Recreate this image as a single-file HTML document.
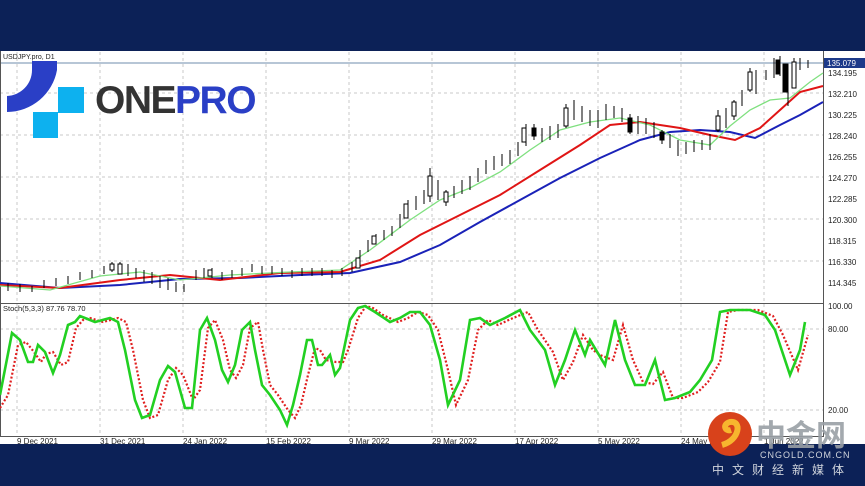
<!DOCTYPE html>
<html><head><meta charset="utf-8"><style>
html,body{margin:0;padding:0;width:865px;height:486px;overflow:hidden;background:#0c2157;font-family:"Liberation Sans",sans-serif}
svg{position:absolute;left:0;top:0}
</style></head><body>
<svg width="865" height="486" viewBox="0 0 865 486">
<rect x="0" y="0" width="865" height="51" fill="#0c2157"/>
<rect x="0" y="51" width="865" height="393" fill="#fff"/>
<rect x="0" y="444" width="865" height="42" fill="#0c2157"/>
<g stroke="#c8c8c8" stroke-dasharray="3,3" stroke-width="1">
<line x1="17" y1="52" x2="17" y2="436"/><line x1="100" y1="52" x2="100" y2="436"/><line x1="183" y1="52" x2="183" y2="436"/><line x1="266" y1="52" x2="266" y2="436"/><line x1="349" y1="52" x2="349" y2="436"/><line x1="432" y1="52" x2="432" y2="436"/><line x1="515" y1="52" x2="515" y2="436"/><line x1="598" y1="52" x2="598" y2="436"/><line x1="681" y1="52" x2="681" y2="436"/><line x1="764" y1="52" x2="764" y2="436"/>
<line x1="0" y1="93" x2="823" y2="93"/><line x1="0" y1="135" x2="823" y2="135"/><line x1="0" y1="177" x2="823" y2="177"/><line x1="0" y1="219" x2="823" y2="219"/><line x1="0" y1="261" x2="823" y2="261"/>
<line x1="0" y1="329" x2="823" y2="329"/><line x1="0" y1="410" x2="823" y2="410"/>
</g>
<line x1="0" y1="63" x2="823" y2="63" stroke="#9fb3c8" stroke-width="1.5"/>
<g stroke="#555" fill="none" stroke-width="1">
<line x1="0.5" y1="51" x2="0.5" y2="436"/><line x1="823.5" y1="51" x2="823.5" y2="436"/>
<line x1="0" y1="303.5" x2="824" y2="303.5"/><line x1="0" y1="436.5" x2="824" y2="436.5"/>
</g>
<polyline fill="none" stroke="#1a22b8" stroke-width="2" points="0,283 60,288 120,285 180,279 240,278 300,275 350,273 400,262 440,245 480,222 520,200 560,178 600,158 640,140 670,132 700,130 730,132 755,138 780,125 800,115 823,102"/>
<polyline fill="none" stroke="#e01515" stroke-width="2" points="0,285 60,288 120,280 170,275 220,280 280,273 340,272 380,260 420,235 460,215 500,195 540,170 580,145 610,125 640,122 680,128 710,135 735,140 760,128 780,110 800,92 823,86"/>
<polyline fill="none" stroke="#7fe07f" stroke-width="1.3" points="0,286 50,290 100,276 140,272 180,280 230,275 290,272 340,270 370,250 410,220 440,200 470,188 500,172 530,150 560,130 590,122 620,118 650,125 680,140 710,145 730,126 750,110 770,100 790,98 810,82 823,73"/>
<g stroke="#000" stroke-width="1" fill="#fff">
<path d="M8,283v8M20,284v8M32,286v6M44,280v8M56,278v8M68,276v8M80,272v8M92,270v8M104,266v8M112,262v10M120,262v12M128,264v12M136,268v10M144,270v12M152,272v12M160,276v12M168,278v12M176,282v10M184,284v8M196,270v10M204,268v10M212,268v10M222,272v8M232,270v8M242,268v8M252,264v8M262,266v8M272,266v8M282,268v8M292,270v8M302,268v8M312,268v8M322,268v8M332,270v8M342,268v8M352,262v10M360,250v12M368,240v12M376,234v10M384,230v10M392,226v10M400,214v14M408,200v14M416,196v14M424,190v14M430,168v34M438,180v20M446,190v16M454,186v12M462,180v14M470,176v14M478,168v14M486,160v14M494,156v14M502,154v12M510,150v14M518,142v14M526,124v22M534,124v16M542,128v14M550,126v14M558,124v14M566,104v24M574,100v20M582,106v16M590,110v16M598,110v18M606,104v16M614,106v12M622,108v14M630,114v20M638,116v18M646,118v16M654,122v16M662,130v14M670,134v14M678,140v16M686,142v12M694,140v12M702,140v10M710,134v16M718,110v22M726,108v20M734,100v20M742,90v16M750,68v24M756,70v24M766,70v10M774,58v20M780,56v20M788,66v40M794,58v30M800,58v12M808,60v8"/>
<path d="M110,264h4v6h-4zM118,264h4v10h-4zM208,270h4v6h-4zM356,258h4v10h-4zM372,236h4v8h-4zM404,204h4v14h-4zM428,176h4v20h-4zM444,192h4v10h-4zM522,128h4v14h-4zM564,108h4v18h-4zM716,116h4v14h-4zM732,102h4v14h-4zM748,72h4v18h-4zM792,62h4v26h-4z"/>
<path d="M532,128h4v8h-4zM628,118h4v14h-4zM660,132h4v8h-4zM776,60h4v14h-4zM783,64h5v28h-5z" fill="#000"/>
</g>
<polyline fill="none" stroke="#e02020" stroke-width="2.2" stroke-dasharray="2,2" points="0,408 8,395 18,345 26,342 34,352 41,362 46,354 53,352 61,365 68,362 76,328 83,320 90,318 103,322 118,318 126,322 133,350 143,400 150,418 158,415 168,380 176,368 183,375 193,400 200,390 208,328 215,320 223,340 230,370 236,378 243,365 250,328 258,322 263,350 270,385 278,395 288,410 295,418 301,405 308,375 315,348 320,350 326,360 336,362 343,362 348,350 358,318 366,306 373,308 383,315 398,322 408,318 418,312 428,315 438,330 448,370 456,405 468,380 478,330 488,320 498,325 513,318 528,312 538,330 553,352 563,380 573,362 583,335 593,350 600,355 613,360 623,325 633,360 643,382 653,384 663,372 673,398 683,398 698,392 708,382 720,362 728,312 738,310 758,310 773,316 783,335 798,370 808,335"/>
<polyline fill="none" stroke="#22d022" stroke-width="2.6" points="0,395 12,333 20,340 28,362 33,362 38,345 45,352 53,373 60,355 68,325 75,322 80,316 85,318 95,322 110,318 118,322 125,350 135,400 142,418 150,415 160,380 168,366 175,372 185,408 192,408 200,330 207,318 215,340 222,370 228,382 235,365 242,330 250,322 255,350 262,385 270,395 280,410 287,425 293,405 300,375 307,340 312,340 318,365 322,365 330,355 335,375 340,368 350,320 358,308 365,306 375,312 390,322 400,318 410,312 420,312 430,325 440,360 448,405 460,380 470,320 480,318 490,325 505,318 520,310 530,330 545,350 555,385 565,360 575,330 585,355 590,340 605,365 615,320 625,360 635,385 645,385 655,360 665,400 675,398 690,392 700,380 712,360 720,312 730,310 750,310 765,315 775,330 790,375 800,350 805,322"/>
<g font-size="8" fill="#222" font-family="Liberation Sans,sans-serif">
<text x="3" y="59" font-size="7">USDJPY.pro, D1</text>
<text x="3" y="311" font-size="7.5">Stoch(5,3,3) 87.76 78.70</text>
<text x="828" y="76">134.195</text><text x="828" y="97">132.210</text><text x="828" y="118">130.225</text><text x="828" y="139">128.240</text><text x="828" y="160">126.255</text><text x="828" y="181">124.270</text><text x="828" y="202">122.285</text><text x="828" y="223">120.300</text><text x="828" y="244">118.315</text><text x="828" y="265">116.330</text><text x="828" y="286">114.345</text>
<text x="828" y="309">100.00</text><text x="828" y="332">80.00</text><text x="828" y="413">20.00</text>
<text x="17" y="444">9 Dec 2021</text><text x="100" y="444">31 Dec 2021</text><text x="183" y="444">24 Jan 2022</text><text x="266" y="444">15 Feb 2022</text><text x="349" y="444">9 Mar 2022</text><text x="432" y="444">29 Mar 2022</text><text x="515" y="444">17 Apr 2022</text><text x="598" y="444">5 May 2022</text><text x="681" y="444">24 May 2022</text><text x="764" y="444">1 Jun 2022</text>
</g>
<rect x="824" y="58" width="41" height="10" fill="#1d3a8a"/>
<text x="827" y="66" font-size="8" fill="#fff">135.079</text>
<path d="M7,112 V96 A26,26 0 0 0 32,70 V61 H57 V70 A51,51 0 0 1 7,112 Z" fill="#2a3fc6"/>
<rect x="58" y="87" width="26" height="26" fill="#0db1ef"/>
<rect x="33" y="112" width="25" height="26" fill="#0db1ef"/>
<text x="95" y="113" font-size="39" font-weight="bold" fill="#333" letter-spacing="-1.5">ONE<tspan fill="#2a3fc6">PRO</tspan></text>
<circle cx="730" cy="434" r="22" fill="#d8421b"/>
<path d="M722,445 C740,440 742,420 730,422 C722,424 725,432 731,430" fill="none" stroke="#f7b62e" stroke-width="6"/>
<text x="756" y="446" font-size="30" font-weight="bold" fill="#9aa0a6" font-family="Liberation Sans,'Noto Sans CJK SC',sans-serif" opacity="0.9">中金网</text>
<text x="760" y="458" font-size="9" fill="#d0d4dc" letter-spacing="1">CNGOLD.COM.CN</text>
<text x="712" y="474" font-size="12" fill="#d0d4dc" letter-spacing="8" font-family="'Noto Sans CJK SC',sans-serif">中文财经新媒体</text>
</svg>
</body></html>
